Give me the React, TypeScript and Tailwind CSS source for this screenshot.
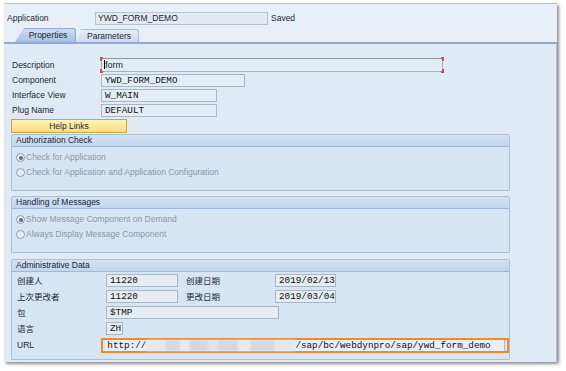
import React from 'react'

const sans = "font-['Tahoma','Liberation_Sans',sans-serif]"
const mono = "font-['Liberation_Mono',monospace]"

function Field({ w, value, className = '' }: { w: string; value: string; className?: string }) {
  return (
    <div className={`${w} h-[13px] border border-[#a9b6c4] bg-[#e4edf6] ${mono} text-[9.3px] leading-[11px] text-[#111] pl-[3px] whitespace-nowrap overflow-hidden ${className}`}>
      {value}
    </div>
  )
}

function Radio({ checked, label }: { checked?: boolean; label: string }) {
  return (
    <div className="flex items-center h-[15px] gap-[1px] text-[#8b98a8]">
      <span className="w-[9px] h-[9px] rounded-full border border-[#8f9cac] bg-[#e4edf6] flex items-center justify-center">
        {checked && <span className="w-[4px] h-[4px] rounded-full bg-[#5d6b7b]" />}
      </span>
      <span>{label}</span>
    </div>
  )
}

function Group({ title, children, h }: { title: string; children: React.ReactNode; h: string }) {
  return (
    <div className={`w-[499px] ${h} border border-[#a8c0dc] rounded-t-[2px] bg-[#d5e5f4] flex flex-col`}>
      <div className="h-[12px] border-b border-[#9fb8d6] bg-gradient-to-b from-[#d3e2f2] to-[#c2d6ec] pl-[4px] leading-[11px] text-[#1c2733]">
        {title}
      </div>
      {children}
    </div>
  )
}

function Corner({ pos }: { pos: string }) {
  return <span className={`absolute w-[3px] h-[4px] border-[#e0484a] ${pos}`} />
}

export default function App() {
  return (
    <div className={`w-[566px] h-[371px] bg-white ${sans} text-[8.5px] text-[#1c2733] overflow-hidden`}>
      <div className="ml-[4px] mt-[3px] w-[553px] h-[359px] border-t border-[#b8c4d2] shadow-[2px_2px_3px_rgba(0,0,0,0.45)] flex flex-col">
        {/* header */}
        <div className="bg-[#e9eff7] flex flex-col">
          <div className="flex items-center h-[14px] mt-[7px]">
            <span className="ml-[3px] w-[88px]">Application</span>
            <div className="w-[173px] h-[13px] border border-[#b9c3ce] bg-[#e3e9f0] pl-[2px] leading-[11px]">YWD_FORM_DEMO</div>
            <span className="ml-[3px]">Saved</span>
          </div>
          <div className="flex items-end h-[16px] mt-[1px] pl-[11px]">
            <div className="w-[61px] h-[14px] bg-gradient-to-b from-[#c9dbee] to-[#a9c3e1] border-t border-r border-[#8eaad0] rounded-tr-[3px] [clip-path:polygon(9px_0,100%_0,100%_100%,0_100%)] flex items-center justify-center pl-[6px] text-[#1c2733]">
              Properties
            </div>
            <div className="w-[63px] h-[13px] bg-gradient-to-b from-[#e4edf7] to-[#cddced] border-t border-r border-[#a9bfda] rounded-tr-[3px] [clip-path:polygon(5px_0,100%_0,100%_100%,0_100%)] flex items-center justify-center pl-[4px]">
              Parameters
            </div>
          </div>
          <div className="h-[2px] bg-[#8eaad0]" />
        </div>

        {/* content */}
        <div className="flex-1 bg-[#dfeaf5] border-r border-[#b3c0cf] flex flex-col pl-[7px]">
          <div className="mt-[14px] flex flex-col gap-[2px]">
            <div className="flex items-center h-[14px]">
              <span className="ml-[1px] w-[89px]">Description</span>
              <div className="relative">
                <div className={`w-[342px] h-[14px] border border-[#a9b0b8] border-t-[#8c949c] bg-[#e3ecf5] ${sans} text-[9px] leading-[12px] pl-[3px]`}>
                  form
                </div>
                <Corner pos="-left-[1px] -top-[1px] border-l-2 border-t-2" />
                <Corner pos="-left-[1px] -bottom-[1px] border-l-2 border-b-2" />
                <Corner pos="-right-[1px] -top-[1px] border-r-2 border-t-2" />
                <Corner pos="-right-[1px] -bottom-[1px] border-r-2 border-b-2" />
                <span className="absolute left-[3px] top-[2px] w-[1px] h-[9px] bg-black" />
              </div>
            </div>
            <div className="flex items-center h-[13px]">
              <span className="ml-[1px] w-[89px]">Component</span>
              <Field w="w-[144px]" value="YWD_FORM_DEMO" />
            </div>
            <div className="flex items-center h-[13px]">
              <span className="ml-[1px] w-[89px]">Interface View</span>
              <Field w="w-[116px]" value="W_MAIN" />
            </div>
            <div className="flex items-center h-[13px]">
              <span className="ml-[1px] w-[89px]">Plug Name</span>
              <Field w="w-[116px]" value="DEFAULT" />
            </div>
            <button className="w-[116px] h-[14px] border border-[#c9a84a] bg-gradient-to-b from-[#fff2b8] to-[#f9dc78] leading-[12px] text-[#1c2733]">
              Help Links
            </button>
          </div>

          <div className="mt-[1px]">
            <Group title="Authorization Check" h="h-[57px]">
              <div className="flex flex-col pl-[4px] pt-[3px]">
                <Radio checked label="Check for Application" />
                <Radio label="Check for Application and Application Configuration" />
              </div>
            </Group>
          </div>

          <div className="mt-[5px]">
            <Group title="Handling of Messages" h="h-[57px]">
              <div className="flex flex-col pl-[4px] pt-[3px]">
                <Radio checked label="Show Message Component on Demand" />
                <Radio label="Always Display Message Component" />
              </div>
            </Group>
          </div>

          <div className="mt-[6px]">
            <Group title="Administrative Data" h="h-[101px]">
              <div className="flex flex-col gap-[3px] pt-[2px] pl-[5px] font-['Noto_Sans_CJK_SC',sans-serif]">
                <div className="flex items-center h-[13px]">
                  <span className="w-[89px]">创建人</span>
                  <Field w="w-[72px]" value="11220" />
                  <span className="ml-[8px] w-[89px]">创建日期</span>
                  <Field w="w-[61px]" value="2019/02/13" />
                </div>
                <div className="flex items-center h-[13px]">
                  <span className="w-[89px]">上次更改者</span>
                  <Field w="w-[72px]" value="11220" />
                  <span className="ml-[8px] w-[89px]">更改日期</span>
                  <Field w="w-[61px]" value="2019/03/04" />
                </div>
                <div className="flex items-center h-[13px]">
                  <span className="w-[89px]">包</span>
                  <Field w="w-[173px]" value="$TMP" />
                </div>
                <div className="flex items-center h-[13px]">
                  <span className="w-[89px]">语言</span>
                  <Field w="w-[17px]" value="ZH" />
                </div>
                <div className="flex items-center h-[14px]">
                  <span className={`w-[85px] ${sans}`}>URL</span>
                  <div className="w-[411px] h-[15px] border-2 border-[#f08a2c] flex items-center pl-[2px]">
                    <div className={`w-[400px] h-[11px] border-r border-[#b0bac6] bg-[#e8eff7] ${mono} text-[9.3px] leading-[11px] pl-[2px] flex whitespace-nowrap text-[#111]`}>
                      <span>http://</span>
                      <span className="flex h-[11px] w-[149px] blur-[1px]">
                        <span className="w-[20px] bg-[#e4e9ef]" />
                        <span className="w-[14px] bg-[#d2d9e1]" />
                        <span className="w-[10px] bg-[#e6ebf1]" />
                        <span className="w-[18px] bg-[#d0d7df]" />
                        <span className="w-[10px] bg-[#dfe5ec]" />
                        <span className="w-[20px] bg-[#d2d9e1]" />
                        <span className="w-[12px] bg-[#e6ebf1]" />
                        <span className="w-[24px] bg-[#d3dae2]" />
                        <span className="w-[21px] bg-[#e2e8ee]" />
                      </span>
                      <span>/sap/bc/webdynpro/sap/ywd_form_demo</span>
                    </div>
                  </div>
                </div>
              </div>
            </Group>
          </div>
        </div>
      </div>
    </div>
  )
}
